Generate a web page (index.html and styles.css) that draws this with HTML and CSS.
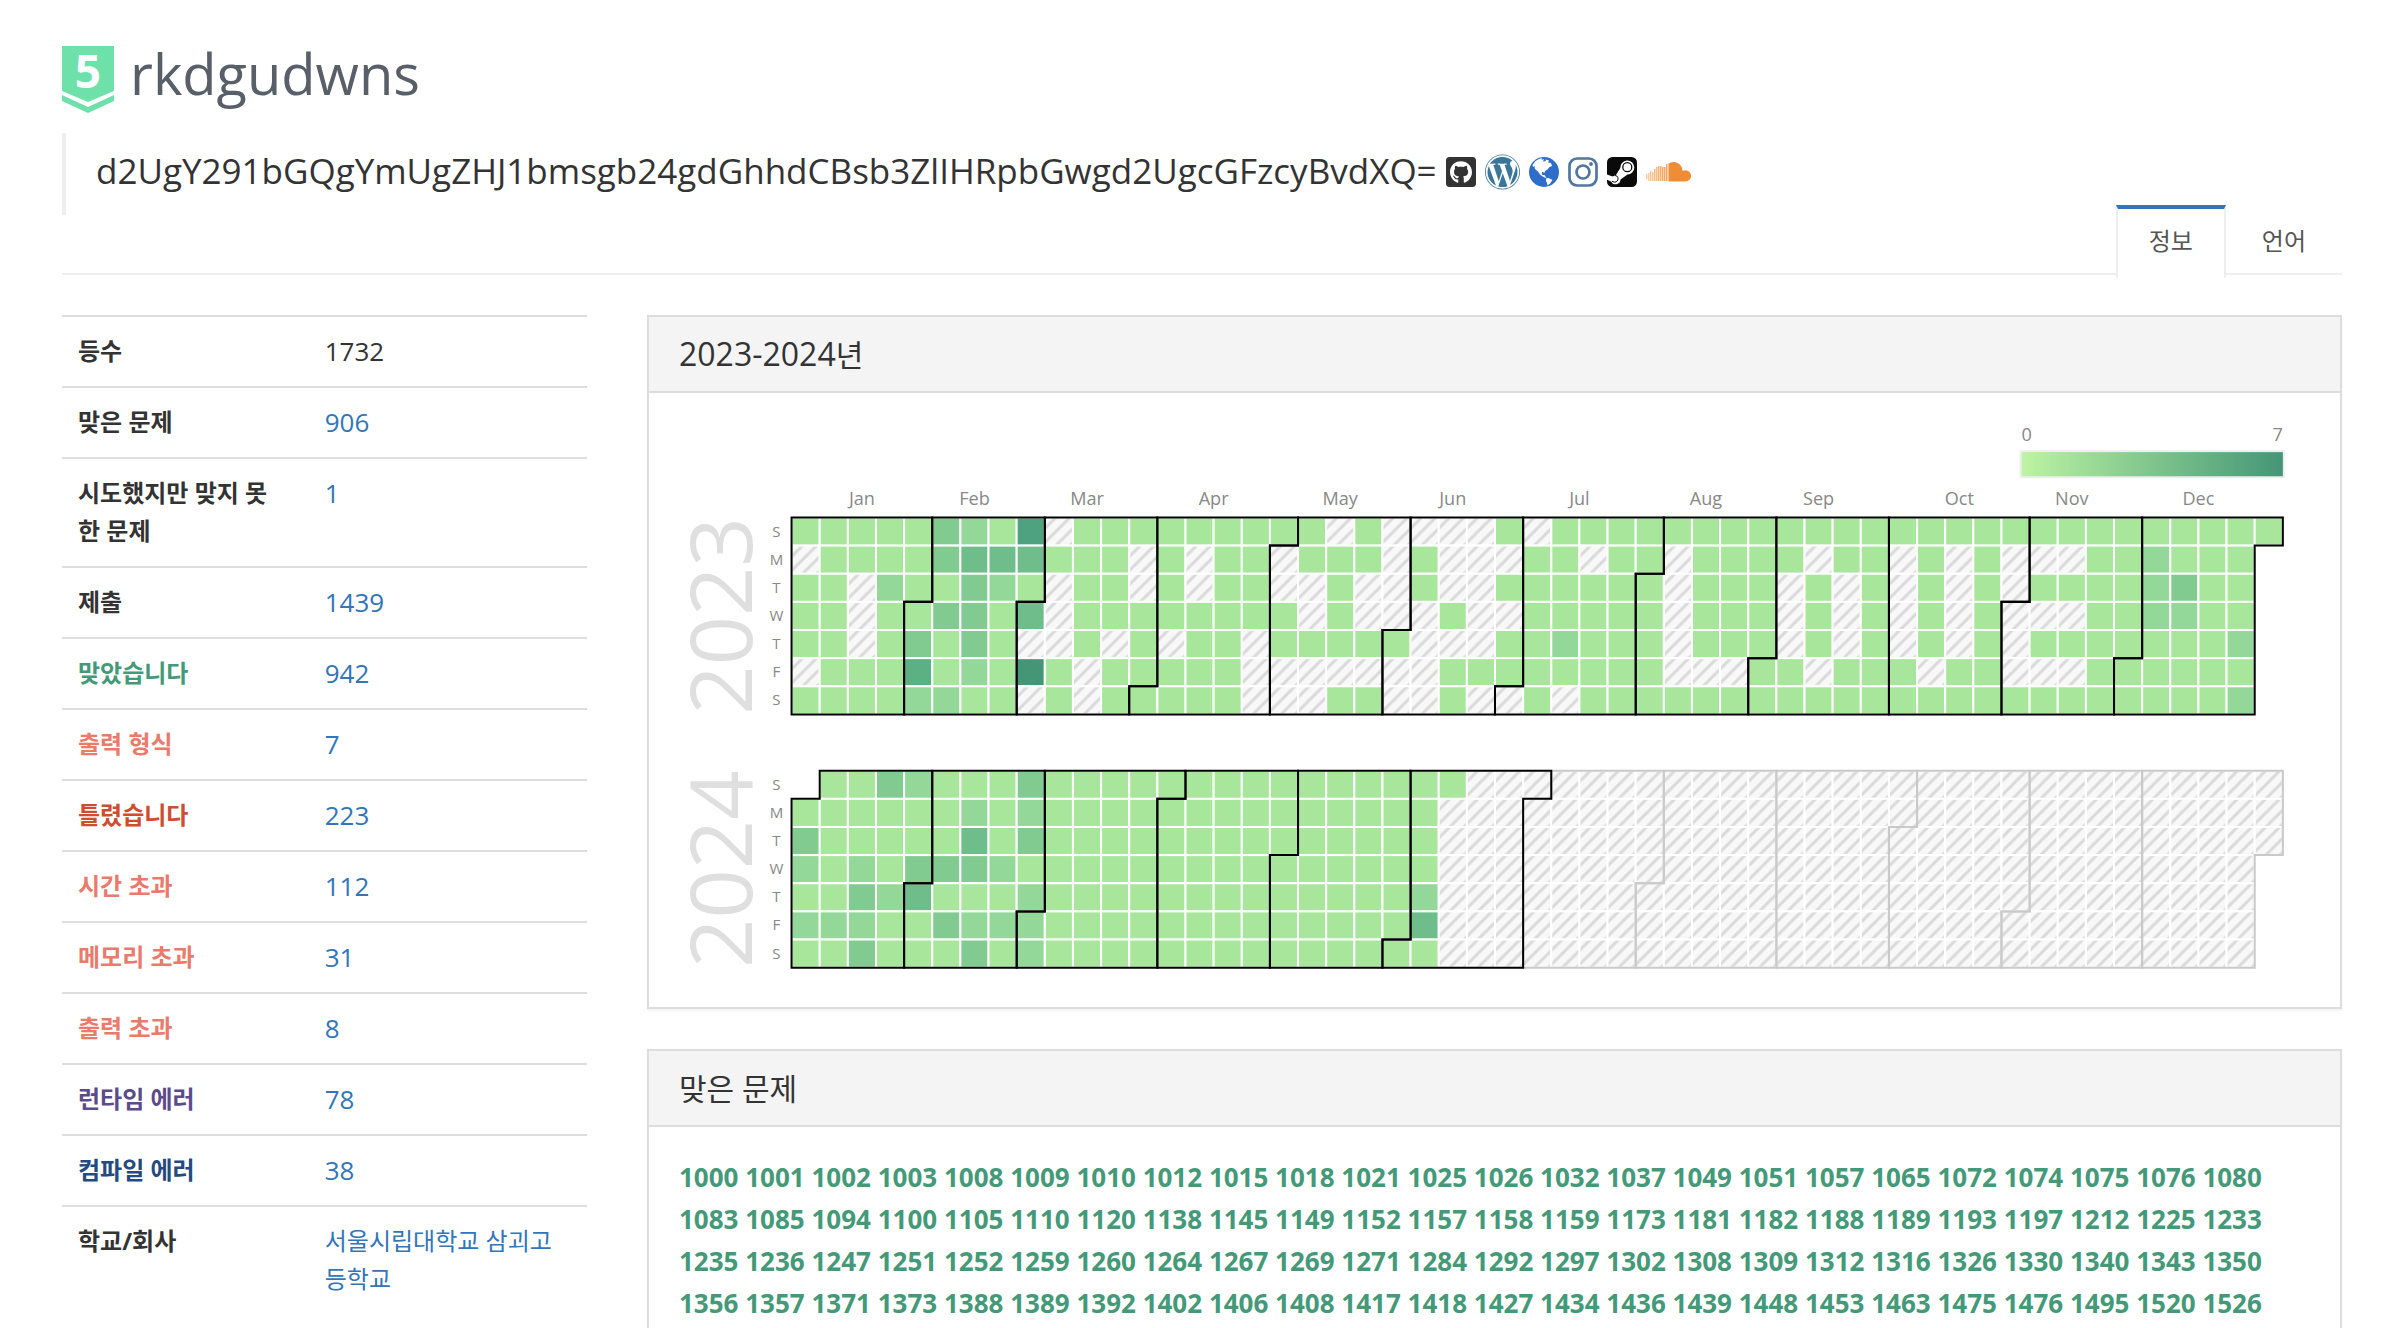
FILE: index.html
```html
<!DOCTYPE html>
<html lang="ko">
<head>
<meta charset="utf-8">
<meta name="viewport" content="width=device-width, initial-scale=1">
<title>rkdgudwns</title>
<link rel="stylesheet" href="styles.css">
</head>
<body>
<div class="container">
  <header class="page-header">
    <svg class="tier" viewBox="0 0 52 67" role="img" aria-label="Platinum 5">
      <path fill="#6ee1ab" d="M0 0H52V45L26 56 0 45ZM0 49 26 61 52 49V55L26 67 0 55Z"/>
      <text class="tier-number" x="26" y="42" text-anchor="middle">5</text>
    </svg>
    <h1>rkdgudwns</h1>
  </header>
  <blockquote class="status">
    d2UgY291bGQgYmUgZHJ1bmsgb24gdGhhdCBsb3ZlIHRpbGwgd2UgcGFzcyBvdXQ=
    <a href="#github" aria-label="GitHub"><svg class="icon" viewBox="0 -13 448 538"><path fill="#333" d="M400 32H48C21.500 32 0 53.500 0 80v352c0 26.500 21.500 48 48 48h352c26.500 0 48-21.500 48-48V80c0-26.500-21.500-48-48-48zM277.300 415.700c-8.400 1.500-11.500-3.700-11.500-8 0-5.400.2-33 .2-55.300 0-15.600-5.200-25.500-11.300-30.700 37-4.100 76-9.200 76-73.100 0-18.200-6.500-27.300-17.100-39 1.700-4.300 7.400-22-1.700-45-13.900-4.300-45.700 17.900-45.700 17.900-13.200-3.700-27.500-5.600-41.600-5.600-14.100 0-28.400 1.900-41.600 5.600 0 0-31.800-22.200-45.700-17.900-9.100 22.900-3.500 40.600-1.700 45-10.600 11.700-15.600 20.800-15.600 39 0 63.600 37.300 69 74.300 73.100-4.800 4.300-9.100 11.700-10.600 22.300-9.500 4.300-33.800 11.700-48.300-13.900-9.100-15.800-25.500-17.100-25.500-17.100-16.200-.2-1.100 10.200-1.100 10.200 10.800 5 18.400 24.200 18.400 24.200 9.700 29.700 56.100 19.700 56.100 19.700 0 13.900.2 36.500.2 40.600 0 4.300-3 9.500-11.500 8-66-22.100-112.200-84.900-112.200-158.300 0-91.800 70.200-161.500 162-161.500S388 165.600 388 257.400c.1 73.400-44.700 136.300-110.700 158.300z"/></svg></a>
    <a href="#blog" aria-label="WordPress"><svg class="icon icon-round" viewBox="8 1 496 510"><path fill="#3b7599" d="M61.700 169.400l101.500 278C92.200 413 43.300 340.200 43.300 256c0-30.900 6.600-60.100 18.400-86.600zm337.900 75.900c0-26.300-9.400-44.500-17.500-58.700-10.800-17.500-20.900-32.400-20.900-49.900 0-19.600 14.800-37.800 35.700-37.800.9 0 1.800.1 2.800.2-37.900-34.700-88.300-55.900-143.700-55.900-74.300 0-139.700 38.100-177.800 95.900 5 .2 9.700.3 13.700.3 22.200 0 56.700-2.700 56.700-2.700 11.500-.7 12.800 16.200 1.400 17.500 0 0-11.500 1.300-24.300 2l77.500 230.400L249.800 247l-33.100-90.800c-11.500-.7-22.300-2-22.300-2-11.500-.7-10.100-18.200 1.300-17.500 0 0 35.100 2.700 56 2.700 22.200 0 56.700-2.700 56.700-2.700 11.500-.7 12.800 16.200 1.400 17.500 0 0-11.500 1.300-24.300 2l76.900 228.700 21.200-70.900c9-29.400 16-50.500 16-68.700zm-139.900 29.300l-63.800 185.500c19.100 5.600 39.200 8.700 60.100 8.700 24.800 0 48.500-4.300 70.600-12.100-.6-.9-1.100-1.900-1.500-2.900l-65.400-179.200zm183-120.700c.9 6.800 1.400 14 1.400 21.900 0 21.600-4 45.800-16.200 76.200l-65 187.900C426.200 403 468.700 334.500 468.700 256c0-37-9.400-71.800-26-102.100zM504 256c0 136.800-111.300 248-248 248C119.200 504 8 392.700 8 256 8 119.200 119.200 8 256 8c136.700 0 248 111.200 248 248zm-11.400 0c0-130.500-106.200-236.600-236.600-236.600C125.500 19.400 19.400 125.500 19.400 256S125.600 492.600 256 492.600c130.500 0 236.600-106.100 236.600-236.600z"/></svg></a>
    <a href="#web" aria-label="Website"><svg class="icon" viewBox="0 0 30 36"><circle cx="15" cy="18" r="15" fill="#2f6dcb"/><path fill="#fff" d="M3.500 11 6.500 7 10 5 13 4 12.500 6 15 5 14 7.500 17 7 16.500 5.500 20 6.500 19 8.500 22 9 23 12 20.500 13 18.500 15.500 16 17 15.500 19 13.500 17.800 12.500 19 13.500 21 15.500 21 17.500 24 15.500 23.500 13 22 11 20.500 9 17.500 6 15 5.500 12 4 13ZM17 24.500 19.500 24 23.500 26 21 29.500 18.500 31.500 18 29 17 27Z"/></svg></a>
    <a href="#instagram" aria-label="Instagram"><svg class="icon" viewBox="0 0 30 36"><g fill="none" stroke="#51779f" stroke-width="2.700"><rect x="1.500" y="4.500" width="27" height="27" rx="7.500"/><circle cx="15" cy="18" r="6.500"/></g><circle cx="23" cy="10" r="1.900" fill="#51779f"/></svg></a>
    <a href="#steam" aria-label="Steam"><svg class="icon" viewBox="0 0 30 36"><rect y="3" width="30" height="30" rx="5.500" fill="#0a0a0a"/><path fill="#fff" d="M0 20.500 5.500 22.500 9 21 13.300 14 A7 7 0 1 1 20.500 20.500L13.500 25.500 A5 5 0 0 1 4 27.500L0 25.800Z"/><circle cx="20.300" cy="13.200" r="4.500" fill="#fff" stroke="#0a0a0a" stroke-width="1.300"/><path d="M5 27.300 7.500 28.200A3.500 3.500 0 0 0 9.800 22L8 21.500" fill="none" stroke="#0a0a0a" stroke-width="1"/></svg></a>
    <a href="#soundcloud" aria-label="SoundCloud"><svg class="icon icon-wide" viewBox="0 0 46 36"><g stroke="#ef8d35" stroke-width="1.300"><path opacity=".5" d="M.8 20V25M2.800 19V27"/><path opacity=".6" d="M4.800 17V27M6.800 18V27"/><path opacity=".7" d="M8.800 15V27M10.800 13V27"/><path opacity=".8" d="M12.800 12V27M14.800 12V27"/><path opacity=".9" d="M16.800 13V27M18.800 13V27M20.800 10V27"/></g><path fill="#ef8d35" d="M22.500 27.500V9.500Q24.500 8 27.800 8C32.500 8 36.200 11.500 36.600 16.800Q37.800 16.300 39.500 16.300A5.600 5.600 0 0 1 39.500 27.500Z"/></svg></a>
  </blockquote>
  <nav aria-label="프로필">
    <ul class="tabs">
      <li><a class="tab tab-active" href="#info">정보</a></li>
      <li><a class="tab" href="#language">언어</a></li>
    </ul>
  </nav>
  <main class="row">
    <section class="side">
      <table class="stats">
        <tbody>
          <tr><th scope="row">등수</th><td>1732</td></tr>
          <tr><th scope="row">맞은 문제</th><td><a href="#s1">906</a></td></tr>
          <tr><th scope="row">시도했지만 맞지 못한 문제</th><td><a href="#s2">1</a></td></tr>
          <tr><th scope="row">제출</th><td><a href="#s3">1439</a></td></tr>
          <tr><th scope="row" class="result-ac">맞았습니다</th><td><a href="#s4">942</a></td></tr>
          <tr><th scope="row" class="result-limit">출력 형식</th><td><a href="#s5">7</a></td></tr>
          <tr><th scope="row" class="result-wa">틀렸습니다</th><td><a href="#s6">223</a></td></tr>
          <tr><th scope="row" class="result-limit">시간 초과</th><td><a href="#s7">112</a></td></tr>
          <tr><th scope="row" class="result-limit">메모리 초과</th><td><a href="#s8">31</a></td></tr>
          <tr><th scope="row" class="result-limit">출력 초과</th><td><a href="#s9">8</a></td></tr>
          <tr><th scope="row" class="result-rte">런타임 에러</th><td><a href="#s10">78</a></td></tr>
          <tr><th scope="row" class="result-ce">컴파일 에러</th><td><a href="#s11">38</a></td></tr>
          <tr><th scope="row">학교/회사</th><td class="schools"><a href="#school1">서울시립대학교</a> <a href="#school2">삼괴고등학교</a></td></tr>
        </tbody>
      </table>
    </section>
    <div class="content">
      <section class="panel">
        <h2 class="panel-title">2023-2024<span class="ko">년</span></h2>
        <div class="panel-body">
          <svg id="heatmap" class="heatmap" viewBox="0 0 1623 551">
            <defs>
              <pattern id="hatch" width="14" height="14" patternUnits="userSpaceOnUse">
                <rect width="14" height="14" fill="#f8f8f8"/>
                <path d="M-4 11 11-4M3 18 18 3" stroke="#dadada" stroke-width="3"/>
              </pattern>
              <linearGradient id="scale">
                <stop offset="0" stop-color="#bff4a3"/>
                <stop offset=".15" stop-color="#a9e69c"/>
                <stop offset="1" stop-color="#449576"/>
              </linearGradient>
            </defs>
            <text class="label" x="1336" y="18">0</text>
            <text class="label" x="1596" y="18" text-anchor="end">7</text>
            <rect x="1335" y="28" width="262" height="26" fill="url(#scale)" stroke="#eee" stroke-width="2"/>
          </svg>
        </div>
      </section>
      <section class="panel">
        <h2 class="panel-title"><span class="ko">맞은 문제</span></h2>
        <div class="panel-body problems" id="problems"></div>
      </section>
    </div>
  </main>
</div>
<script src="app.js"></script>
</body>
</html>
```
FILE: styles.css
```css
* { box-sizing: border-box; }
body {
  margin: 0;
  background: #fff;
  color: #333;
  font-family: "Open Sans", "Noto Sans CJK KR", sans-serif;
  font-size: 26px;
  line-height: 38px;
}
a { color: #3275b9; text-decoration: none; }
h1, h2, ul, blockquote { margin: 0; padding: 0; font-weight: 400; }
.container { padding: 46px 60px 0 62px; }

.page-header { display: flex; gap: 16px; align-items: flex-start; margin-bottom: 20px; }
.page-header h1 { color: #585f69; font-size: 56px; line-height: 54px; }
.tier { width: 52px; height: 67px; display: block; overflow: visible; }
.tier-number { fill: #fff; font-size: 46px; font-weight: 700; }

.status {
  border-left: 4px solid #eee;
  padding: 17px 30px 23px;
  font-size: 35px;
  line-height: 42px;
}
.icon { width: 30px; height: 36px; vertical-align: -6px; }
.icon-round { width: 35px; }
.icon-wide { width: 46px; }

.tabs {
  display: flex;
  justify-content: flex-end;
  list-style: none;
  margin: -10px 0 40px;
  height: 70px;
  border-bottom: 2px solid #eee;
}
.tab {
  display: block;
  height: 73px;
  margin-right: 3px;
  padding: 14px 31px;
  border: 2px solid transparent;
  border-top-width: 4px;
  border-bottom: 0;
  color: #555;
  font-size: 24px;
  line-height: 36px;
}
.tab-active { background: #fff; border-color: #3275b9 #eee; }

.row { display: grid; grid-template-columns: 1fr 3fr; margin: 0 -30px; }
.side, .content { padding: 0 30px; min-width: 0; }

.stats { width: 100%; table-layout: fixed; border-spacing: 0; }
.stats th, .stats td {
  border-top: 2px solid #ddd;
  padding: 15px 16px 16px;
  text-align: left;
  vertical-align: top;
}
.stats th { width: 47%; padding-right: 30px; font-size: 24px; font-weight: 700; }
.stats .schools { font-size: 24px; }
.result-ac { color: #449978; }
.result-wa { color: #cf4d2f; }
.result-limit { color: #ea7a6c; }
.result-rte { color: #5b4b8a; }
.result-ce { color: #234b80; }

.panel {
  border: 2px solid #ddd;
  margin-bottom: 40px;
  box-shadow: 0 2px 2px rgba(0, 0, 0, .05);
}
.panel-title {
  padding: 16px 30px;
  background: #f4f4f4;
  border-bottom: 2px solid #ddd;
  font-size: 32px;
  line-height: 42px;
}
.ko { font-size: 30px; line-height: 1; }
.panel-body { padding: 30px; }
.heatmap { display: block; width: 100%; overflow: visible; }
.label { font-size: 18px; fill: #888; }
.day-label { font-size: 15px; fill: #888; text-anchor: middle; }
.year-label { font-size: 86px; fill: #dfdfdf; text-anchor: middle; }
.problems { padding-top: 29px; font-weight: 700; line-height: 42px; }
.problems a { color: #449978; }
```
FILE: app.js
```javascript
// Solved count per day: one string per weekday (Sun..Sat), one digit per week.
const ones = n => '1'.repeat(n);
const data = {
  2023: [
    '111113216011111111101000010' + ones(26),
    '0111134441110101101110100011011011110110101000112111',
    '1102113210110101100100100111111011101010101011112311',
    '1101133140111111110100010011111011101010101000112211',
    '1101313100101011011111000112111011101010101011111112',
    '0111512171011111000000011111111000110111011000111111',
    '1111221101011111000110010010' + ones(23) + '2'
  ],
  2024: [
    ' 11321113' + ones(15),
    '111111212' + ones(14),
    '311111413' + ones(14),
    '212133321' + ones(14),
    '113241112' + ones(13) + '2',
    '222113222' + ones(13) + '4',
    '113111312' + ones(14)
  ]
};
const colors = ['url(#hatch)', '#a8e69c', '#94d899', '#81cb90', '#6ebd8b', '#5bb084', '#4fa27f', '#459677'];
const CELL = 28, LEFT = 112, TOPS = { 2023: 94, 2024: 346 };
const svg = document.getElementById('heatmap');

function add(name, attrs, text) {
  const el = document.createElementNS('http://www.w3.org/2000/svg', name);
  for (const key in attrs) el.setAttribute(key, attrs[key]);
  if (text) el.textContent = text;
  svg.appendChild(el);
}

const months = { Jan: 2.5, Feb: 6.5, Mar: 10.5, Apr: 15, May: 19.5, Jun: 23.5, Jul: 28, Aug: 32.5, Sep: 36.5, Oct: 41.5, Nov: 45.5, Dec: 50 };
for (const m in months) {
  add('text', { class: 'label', x: LEFT + months[m] * CELL, y: 82, 'text-anchor': 'middle' }, m);
}

for (const year of [2023, 2024]) {
  const top = TOPS[year];
  const first = new Date(Date.UTC(year, 0, 1)).getUTCDay();
  const index = (m, d) => Math.round((Date.UTC(year, m, d) - Date.UTC(year, 0, 1)) / 864e5) + first;
  const mid = top + 3.5 * CELL;
  add('text', { class: 'year-label', transform: `translate(73 ${mid}) rotate(-90)` }, String(year));
  [...'SMTWTFS'].forEach((d, i) => add('text', { class: 'day-label', x: 97, y: top + i * CELL + 19 }, d));

  for (let i = first; i < index(12, 1); i++) {
    const week = Math.floor(i / 7), day = i % 7;
    add('rect', {
      x: LEFT + week * CELL, y: top + day * CELL, width: CELL, height: CELL,
      fill: colors[+(data[year][day][week] || 0)], stroke: '#fff', 'stroke-width': 2
    });
  }

  // Later months first, so that the dark outlines stay on top of the pale ones.
  for (let m = 11; m >= 0; m--) {
    const a = index(m, 1), b = index(m + 1, 1) - 1;
    const w0 = Math.floor(a / 7), d0 = a % 7, w1 = Math.floor(b / 7), d1 = b % 7;
    const X = w => LEFT + w * CELL, Y = d => top + d * CELL;
    add('path', {
      d: `M${X(w0 + 1)} ${Y(d0)}H${X(w0)}V${Y(7)}H${X(w1)}V${Y(d1 + 1)}H${X(w1 + 1)}V${Y(0)}H${X(w0 + 1)}Z`,
      fill: 'none', stroke: year === 2024 && m > 5 ? '#c9c9c9' : '#000', 'stroke-width': 2
    });
  }
}

const problems = `1000 1001 1002 1003 1008 1009 1010 1012 1015 1018 1021 1025 1026 1032 1037 1049 1051 1057 1065 1072 1074 1075 1076 1080
1083 1085 1094 1100 1105 1110 1120 1138 1145 1149 1152 1157 1158 1159 1173 1181 1182 1188 1189 1193 1197 1212 1225 1233
1235 1236 1247 1251 1252 1259 1260 1264 1267 1269 1271 1284 1292 1297 1302 1308 1309 1312 1316 1326 1330 1340 1343 1350
1356 1357 1371 1373 1388 1389 1392 1402 1406 1408 1417 1418 1427 1434 1436 1439 1448 1453 1463 1475 1476 1495 1520 1526`.split(/\s+/);
document.getElementById('problems').innerHTML =
  problems.map(n => `<a href="#problem-${n}">${n}</a>`).join(' ');
```
